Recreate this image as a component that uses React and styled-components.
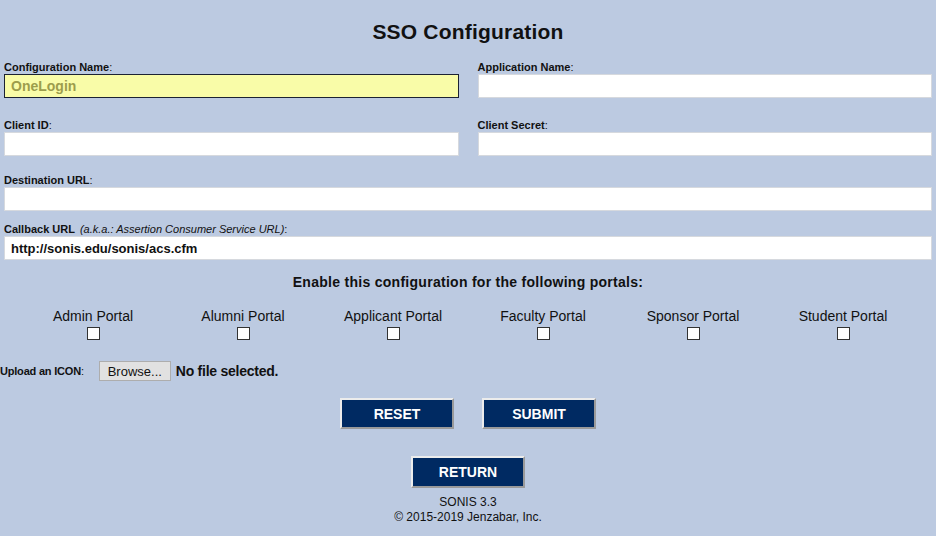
import React from 'react'
import styled, { createGlobalStyle } from 'styled-components'

const GlobalStyle = createGlobalStyle`
  html, body {
    margin: 0;
    padding: 0;
    background: #bccae1;
  }
  body {
    font-family: "Liberation Sans", Arial, sans-serif;
    color: #111;
  }
`

const Page = styled.div`
  width: 936px;
  height: 536px;
  box-sizing: border-box;
  padding: 0 4px;
  overflow: hidden;
`

const Title = styled.h1`
  margin: 0;
  padding-top: 20px;
  font-size: 21px;
  line-height: 24px;
  letter-spacing: 0.2px;
  font-weight: bold;
  text-align: center;
`

const FieldGrid = styled.div`
  display: grid;
  grid-template-columns: 1fr 1fr;
  column-gap: 19px;
  row-gap: 20px;
  margin-top: 16px;
`

const Field = styled.div`
  display: flex;
  flex-direction: column;
  margin-top: ${p => p.$top || 0}px;
`

const Label = styled.label`
  font-size: 11px;
  line-height: 14px;
  font-weight: normal;

  b {
    font-weight: bold;
  }

  i {
    margin-left: 5px;
  }
`

const TextInput = styled.input`
  box-sizing: border-box;
  width: 100%;
  height: 24px;
  margin: 0;
  padding: 0 6px;
  font-family: "Liberation Sans", Arial, sans-serif;
  font-weight: bold;
  font-size: ${p => (p.$highlight ? 14 : 13)}px;
  color: ${p => (p.$highlight ? '#9d9d4c' : '#111')};
  background: ${p => (p.$highlight ? '#f9fca8' : '#fff')};
  border: 1px solid ${p => (p.$highlight ? '#1c2233' : '#d6d9de')};
  outline: none;
`

const Heading = styled.div`
  margin-top: 14px;
  font-size: 14px;
  line-height: 16px;
  letter-spacing: 0.28px;
  font-weight: bold;
  text-align: center;
`

const Portals = styled.div`
  display: grid;
  grid-template-columns: repeat(6, 150px);
  justify-content: center;
  margin-top: 18px;
`

const Portal = styled.div`
  display: flex;
  flex-direction: column;
  align-items: center;
  font-size: 14px;
  line-height: 16px;
`

const Check = styled.input.attrs({ type: 'checkbox' })`
  appearance: none;
  box-sizing: border-box;
  width: 13px;
  height: 13px;
  margin: 3px 0 0;
  background: #fff;
  border: 1px solid #333;
  border-radius: 0;
`

const UploadRow = styled.div`
  display: flex;
  align-items: center;
  margin: 21px 0 0 -4px;
  height: 20px;
`

const UploadLabel = styled.span`
  font-size: 11px;
  font-weight: bold;
  letter-spacing: -0.2px;
  margin-right: 15px;

  span {
    font-weight: normal;
  }
`

const Browse = styled.button`
  box-sizing: border-box;
  width: 72px;
  height: 20px;
  padding: 0;
  font-family: "Liberation Sans", Arial, sans-serif;
  font-size: 13px;
  color: #111;
  background: #e1e1e1;
  border: 1px solid #adadad;
  border-radius: 0;
`

const FileName = styled.span`
  margin-left: 5px;
  font-size: 14px;
  letter-spacing: -0.25px;
  font-weight: bold;
`

const ButtonRow = styled.div`
  display: flex;
  justify-content: center;
  gap: 28px;
  margin-top: ${p => p.$top}px;
`

const NavButton = styled.button`
  box-sizing: border-box;
  width: 114px;
  height: ${p => p.$tall ? 32 : 31}px;
  padding: 0;
  font-family: "Liberation Sans", Arial, sans-serif;
  font-size: 14px;
  font-weight: bold;
  color: #fff;
  background: #002a62;
  border: 2px solid;
  border-color: #ececec #9a9a9a #9a9a9a #ececec;
  border-radius: 0;
`

const Footer = styled.div`
  margin-top: 7px;
  font-size: 12px;
  line-height: 15px;
  text-align: center;
`

const portals = ['Admin Portal', 'Alumni Portal', 'Applicant Portal', 'Faculty Portal', 'Sponsor Portal', 'Student Portal']

export default function App () {
  return (
    <>
      <GlobalStyle />
      <Page>
        <Title>SSO Configuration</Title>
        <FieldGrid>
          <Field>
            <Label><b>Configuration Name</b>:</Label>
            <TextInput $highlight defaultValue="OneLogin" />
          </Field>
          <Field>
            <Label><b>Application Name</b>:</Label>
            <TextInput />
          </Field>
          <Field>
            <Label><b>Client ID</b>:</Label>
            <TextInput />
          </Field>
          <Field>
            <Label><b>Client Secret</b>:</Label>
            <TextInput />
          </Field>
        </FieldGrid>
        <Field $top={17}>
          <Label><b>Destination URL</b>:</Label>
          <TextInput />
        </Field>
        <Field $top={11}>
          <Label><b>Callback URL</b><i>(a.k.a.: Assertion Consumer Service URL)</i>:</Label>
          <TextInput defaultValue="http://sonis.edu/sonis/acs.cfm" />
        </Field>
        <Heading>Enable this configuration for the following portals:</Heading>
        <Portals>
          {portals.map(name => (
            <Portal key={name}>
              {name}
              <Check />
            </Portal>
          ))}
        </Portals>
        <UploadRow>
          <UploadLabel>Upload an ICON<span>:</span></UploadLabel>
          <Browse>Browse...</Browse>
          <FileName>No file selected.</FileName>
        </UploadRow>
        <ButtonRow $top={17}>
          <NavButton>RESET</NavButton>
          <NavButton>SUBMIT</NavButton>
        </ButtonRow>
        <ButtonRow $top={27}>
          <NavButton $tall>RETURN</NavButton>
        </ButtonRow>
        <Footer>
          SONIS 3.3<br />
          © 2015-2019 Jenzabar, Inc.
        </Footer>
      </Page>
    </>
  )
}
